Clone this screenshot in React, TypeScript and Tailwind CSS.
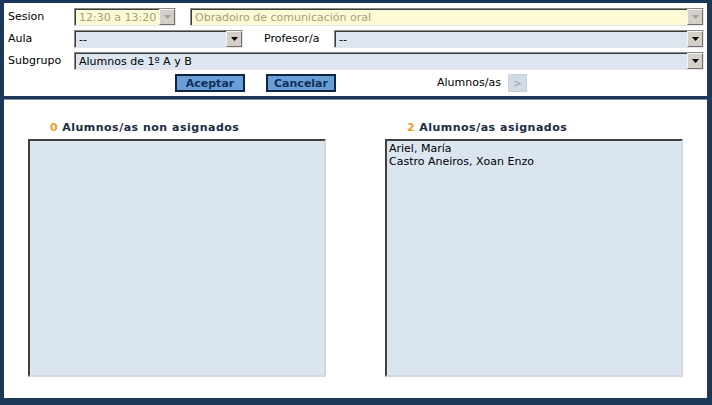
import { ReactNode } from "react";

const FONT = "font-['DejaVu_Sans','Verdana',sans-serif]";

function Arrow({ disabled }: { disabled?: boolean }) {
  return (
    <span className="flex h-[16px] w-[16px] shrink-0 items-center justify-center border border-t-[#f4f4f4] border-l-[#f4f4f4] border-b-[#6e6e6e] border-r-[#6e6e6e] bg-[#d4d0c8]">
      <svg width="7" height="4" viewBox="0 0 7 4">
        <path d="M0 0h7L3.5 4z" fill={disabled ? "#a0a0a0" : "#000"} />
      </svg>
    </span>
  );
}

function Select({
  value,
  className = "",
  disabled,
}: {
  value: string;
  className?: string;
  disabled?: boolean;
}) {
  return (
    <div
      className={`flex h-[18px] items-center border border-t-[#8a8a8a] border-l-[#8a8a8a] border-b-[#e6e6e6] border-r-[#e6e6e6] shadow-[inset_1px_1px_0_#3c3c3c] ${
        disabled ? "bg-[#fdfbd4] text-[#a39e82]" : "bg-[#dce5f0] text-black"
      } ${className}`}
    >
      <span className="flex-1 truncate pl-[4px] text-[11px] leading-none">{value}</span>
      <Arrow disabled={disabled} />
    </div>
  );
}

function Row({ label, children }: { label: string; children: ReactNode }) {
  return (
    <div className="flex h-[18px] items-center">
      <span className="w-[66px] shrink-0 text-[11px] text-black">{label}</span>
      {children}
    </div>
  );
}

function Btn({ children }: { children: ReactNode }) {
  return (
    <button className="h-[18px] w-[70px] border-2 border-[#0f2440] bg-[#6a9ed6] text-[11px] font-bold leading-none text-[#11305a]">
      {children}
    </button>
  );
}

function ListBox({ count, title, items }: { count: number; title: string; items: string[] }) {
  return (
    <div className="flex flex-col">
      <div className="mb-[4px] pl-[22px] text-[11px] font-bold leading-[14px] tracking-[0.5px] text-[#1a2a44]">
        <span className="mr-[4px] text-[#f0a030]">{count}</span>
        {title}
      </div>
      <div className="h-[238px] w-[298px] border-2 border-t-[#404040] border-l-[#404040] border-b-[#d8d8d8] border-r-[#d8d8d8] bg-[#dbe5f0] px-[2px] pt-[1px] text-[11px] leading-[13px] text-black">
        {items.map((it) => (
          <div key={it}>{it}</div>
        ))}
      </div>
    </div>
  );
}

export default function App() {
  return (
    <div
      className={`${FONT} flex h-[405px] w-[712px] flex-col border-t-[3px] border-l-[4px] border-r-[5px] border-b-[7px] border-[#1c3858] bg-white`}
    >
      {/* top form */}
      <div className="flex h-[96px] shrink-0 flex-col gap-[4px] border-b-[3px] border-[#1c3858] pl-[4px] pr-[3px] pt-[5px]">
        <Row label="Sesion">
          <Select value="12:30 a 13:20" className="w-[102px]" disabled />
          <Select value="Obradoiro de comunicación oral" className="ml-[14px] flex-1" disabled />
        </Row>
        <Row label="Aula">
          <Select value="--" className="w-[169px]" />
          <span className="ml-[21px] w-[70px] text-[11px]">Profesor/a</span>
          <Select value="--" className="flex-1" />
        </Row>
        <Row label="Subgrupo">
          <Select value="Alumnos de 1º A y B" className="flex-1" />
        </Row>
        <div className="flex h-[18px] items-center">
          <div className="ml-[167px] flex gap-[21px]">
            <Btn>Aceptar</Btn>
            <Btn>Cancelar</Btn>
          </div>
          <span className="ml-[101px] text-[11px]">Alumnos/as</span>
          <span className="ml-[7px] flex h-[18px] w-[19px] items-center justify-center border border-[#c8d0da] bg-[#d2dae6] text-[10px] text-[#8aa0c0]">
            &gt;
          </span>
        </div>
      </div>

      {/* lists */}
      <div className="flex flex-1 border-t border-[#8090a0] pl-[24px] pt-[21px]">
        <ListBox count={0} title="Alumnos/as non asignados" items={[]} />
        <div className="ml-[59px]">
          <ListBox count={2} title="Alumnos/as asignados" items={["Ariel, María", "Castro Aneiros, Xoan Enzo"]} />
        </div>
      </div>
    </div>
  );
}
